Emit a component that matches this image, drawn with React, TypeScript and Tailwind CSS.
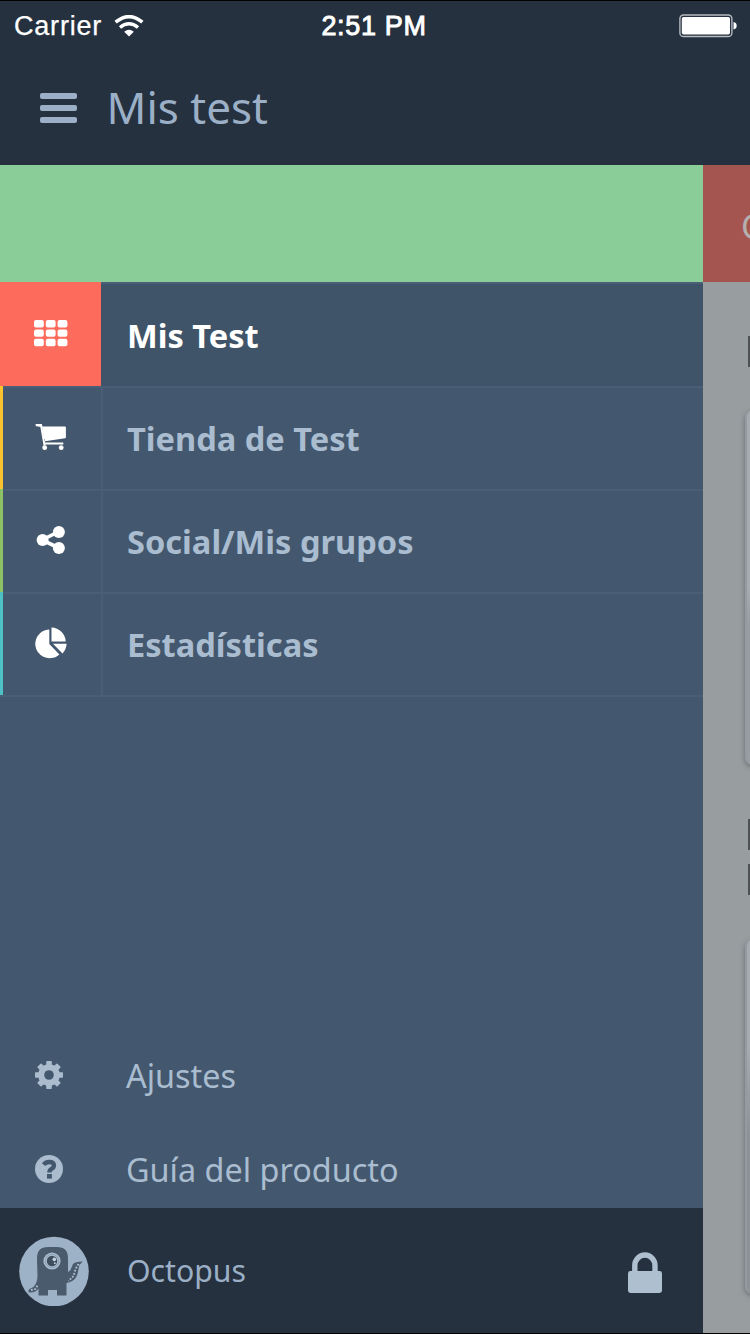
import React from "react";

const sans = "font-['Noto_Sans','Open_Sans',sans-serif]";

function GridIcon() {
  return (
    <svg viewBox="0 0 34 27" className="h-[27px] w-[34px] fill-white">
      {[0, 1, 2].map((r) =>
        [0, 1, 2].map((c) => (
          <rect key={`${r}${c}`} x={c * 11.8} y={r * 9.4} width="9.8" height="7.4" rx="2" />
        )),
      )}
    </svg>
  );
}

function CartIcon() {
  return (
    <svg viewBox="0 0 32 28" className="h-7 w-8">
      <path d="M.8 2.2H6L9.6 22.6M9 20.4H28.3" fill="none" stroke="#fff" strokeWidth="2" />
      <path d="M7 3.6H30Q30.9 3.6 30.9 4.6V14.2Q30.9 15 30 15.2L10 18.3V16H9Z" fill="#fff" />
      <path d="M.7 1H6.7L7.5 3.8H5Q2 3.6.7 2Z" fill="#fff" />
      <circle cx="9.7" cy="24.7" r="2.4" fill="#fff" />
      <circle cx="26.2" cy="24.7" r="2.4" fill="#fff" />
    </svg>
  );
}

function ShareIcon() {
  return (
    <svg viewBox="0 0 30 30" className="h-[30px] w-[30px] fill-white">
      <path d="M23 6.5L6 15L23 23" fill="none" stroke="#fff" strokeWidth="3.6" />
      <circle cx="22.9" cy="6.9" r="6" />
      <circle cx="6.6" cy="14.9" r="6" />
      <circle cx="22.9" cy="23.1" r="6" />
    </svg>
  );
}

function PieIcon() {
  return (
    <svg viewBox="0 0 32 32" className="h-8 w-8 fill-white">
      <path d="M14.3 2.4V17L24.4 27.4A14.4 14.4 0 1 1 14.3 2.4Z" />
      <path d="M16.5.5A14.6 14.6 0 0 1 30.7 14.6H16.5Z" />
      <path d="M18 16.8H31.6Q31.3 22.4 27.5 26.6Z" />
    </svg>
  );
}

function GearIcon() {
  return (
    <svg viewBox="0 0 28 28" className="h-7 w-7">
      <g fill="#aabccd">
        {[0, 45, 90, 135].map((a) => (
          <rect key={a} x="11.2" y="0" width="5.6" height="28" rx=".8" transform={`rotate(${a} 14 14)`} />
        ))}
        <circle cx="14" cy="14" r="10.8" />
      </g>
      <circle cx="14" cy="14" r="4.8" fill="#43586e" />
    </svg>
  );
}

function HelpIcon() {
  return (
    <svg viewBox="0 0 28 28" className="h-7 w-7">
      <circle cx="14" cy="14" r="14" fill="#aabccd" />
      <path d="M8.6 9.6Q10.7 7 14.3 7Q18.9 7 18.9 10.4Q18.9 12.3 16.5 13.8Q14.4 15 14.4 17.4" fill="none" stroke="#43586e" strokeWidth="4.4" />
      <rect x="12" y="19" width="4.9" height="4.6" fill="#43586e" />
    </svg>
  );
}

function LockIcon() {
  return (
    <svg viewBox="0 0 34 42" className="h-[42px] w-[34px]">
      <path d="M6.8 21V13.6A10.1 10.6 0 0 1 27 13.6V21" fill="none" stroke="#aebfd0" strokeWidth="5.4" />
      <rect x="0" y="19" width="34" height="22" rx="2.4" fill="#aebfd0" />
    </svg>
  );
}

function Monster() {
  return (
    <svg viewBox="0 0 70 70" className="h-[70px] w-[70px]">
      <circle cx="35" cy="35.5" r="34.8" fill="#9eb2c7" />
      <g fill="#4a5b6d">
        <path d="M18 22Q18 11 29 11H38Q49 11 49 22V36L51.5 34L54 28Q56 25.5 63.5 25.5Q62.5 27.5 60.5 28.5L58.5 38Q56 46 47.5 47V59.5H38V54H29V59.5H19.5V52.5Q17 56.8 10 56.4Q8.7 54.6 10.5 53L14.5 51Q18 47 18.5 41Z" />
      </g>
      <path d="M59.5 28L56.5 33L54.5 40L49.5 45M12 54L16.5 53L19 48.5" fill="none" stroke="#b0bfce" strokeWidth="1.8" strokeDasharray="1.8 1.5" />
      <circle cx="33" cy="25" r="8.6" fill="#a9bccf" />
      <circle cx="33" cy="25" r="7" fill="#7e92a6" />
      <circle cx="33" cy="25" r="6.4" fill="#a9bccf" />
      <circle cx="33" cy="25" r="5.2" fill="#3f4e5f" />
      <circle cx="35.3" cy="23.4" r="1.8" fill="#c5d3e0" />
      <circle cx="35.8" cy="27.2" r=".9" fill="#c5d3e0" />
    </svg>
  );
}

function StatusBar() {
  return (
    <div className="flex h-[50px] items-center pl-3.5 pr-[13px] font-['Liberation_Sans',sans-serif] text-white">
      <div className="flex flex-1 items-center gap-[13px]">
        <span className="text-[27px] tracking-[0.8px] [-webkit-text-stroke:0.25px_white]">Carrier</span>
        <svg viewBox="0 0 30 22" className="-ml-px h-[22px] w-[30px]">
          <path d="M1.6 7.2Q15-4 28.4 7.2" fill="none" stroke="#fff" strokeWidth="3.5" />
          <path d="M6 12.5Q15 5 24 12.5" fill="none" stroke="#fff" strokeWidth="3.4" />
          <path d="M10.2 16.8Q15 12.5 19.8 16.8L15 21.4Z" fill="#fff" />
        </svg>
      </div>
      <span className="mr-[3px] text-[27px] tracking-[0.65px] [-webkit-text-stroke:0.9px_white]">2:51 PM</span>
      <div className="flex flex-1 justify-end">
        <svg viewBox="0 0 58 24" className="h-6 w-[58px]">
          <rect x=".9" y="1" width="52" height="21.5" rx="3.6" fill="none" stroke="#b5babf" strokeWidth="1.4" />
          <rect x="2.8" y="3" width="48.2" height="17.6" rx="1.8" fill="#fff" />
          <path d="M54.5 8Q57.7 8.6 57.7 11.7T54.5 15.5Z" fill="#fff" />
        </svg>
      </div>
    </div>
  );
}

const items = [
  { label: "Mis Test", icon: <GridIcon />, bar: "bg-[#fc6b5b]", active: true },
  { label: "Tienda de Test", icon: <CartIcon />, bar: "bg-[#fcc22d]", active: false },
  { label: "Social/Mis grupos", icon: <ShareIcon />, bar: "bg-[#8dc265]", active: false },
  { label: "Estadísticas", icon: <PieIcon />, bar: "bg-[#4dc1c5]", active: false },
];

export default function App() {
  return (
    <div className={`flex h-[1334px] w-[750px] flex-col overflow-hidden border-y border-black bg-[#26313f] ${sans}`}>
      <header className="h-[164px] shrink-0">
        <StatusBar />
        <div className="flex h-[114px] items-center pl-[39.5px]">
          <div className="flex flex-col gap-1.5">
            <i className="h-1.5 w-[37px] rounded-xs bg-[#9bb0c6]" />
            <i className="h-1.5 w-[37px] rounded-xs bg-[#9bb0c6]" />
            <i className="h-1.5 w-[37px] rounded-xs bg-[#9bb0c6]" />
          </div>
          <h1 className="ml-[30px] pb-0.5 text-[44px] leading-none text-[#9bb0c6]">Mis test</h1>
        </div>
      </header>

      <div className="flex min-h-0 flex-1">
        <aside className="flex w-[703px] shrink-0 flex-col bg-[#43586e]">
          <div className="h-[117px] shrink-0 bg-[#8acd98]" />
          <nav>
            {items.map((it) => (
              <div key={it.label} className={it.active ? "flex h-[104px] bg-[#3f5468]" : "flex h-[103px]"}>
                <div className={it.active ? "flex w-[101px] bg-[#fc6b5b]" : "flex w-[101px]"}>
                  <div className={`w-[2.5px] ${it.bar}`} />
                  <div
                    className={
                      it.active
                        ? "flex flex-1 items-center justify-center pb-0.5 pr-[2.5px]"
                        : "flex flex-1 items-center justify-center border-t-2 border-[#4a5f76] pb-[3px] pr-0.5"
                    }
                  >
                    {it.icon}
                  </div>
                </div>
                <div
                  className={
                    it.active
                      ? "flex flex-1 items-center border-t-2 border-[#4b6077] pl-[26px] pt-0.5 text-[32.6px] font-bold text-white"
                      : "flex flex-1 items-center border-l-2 border-t-2 border-[#4a5f76] pl-6 pt-px text-[32.6px] font-bold text-[#aabccf]"
                  }
                >
                  {it.label}
                </div>
              </div>
            ))}
            <div className="h-0.5 bg-[#4a5f76]" />
          </nav>
          <div className="flex-1" />
          <div className="flex h-[110px] items-center pl-[35px] text-[32.4px] text-[#aabccf]">
            <GearIcon />
            <span className="ml-[63px]">Ajustes</span>
          </div>
          <div className="flex h-[78px] items-center pl-[35px] text-[32.4px] text-[#aabccf]">
            <HelpIcon />
            <span className="ml-[63px]">Guía del producto</span>
          </div>
          <footer className="flex h-[125px] shrink-0 items-center bg-[#26313f] pl-[19px] pr-[41px]">
            <Monster />
            <span className="ml-[38px] text-[30.2px] text-[#9bb0c6]">Octopus</span>
            <div className="ml-auto pt-1">
              <LockIcon />
            </div>
          </footer>
        </aside>

        <main className="w-[47px] overflow-hidden bg-[#989da0]">
          <div className="flex h-[117px] items-center overflow-hidden bg-[#a55550] pl-[38px] pt-1.5 text-[34px] text-[#b4b0b0]">
            C
          </div>
          <div className="pl-[45px] pt-[54px]">
            <div className="h-[31px] bg-[#4d5153]" />
          </div>
          <div className="ml-[42px] mt-[43px] h-[355px] w-20 rounded-lg border-l-2 border-[#9599a0] bg-linear-to-b from-[#a5abb0] from-50% to-[#979da2] to-60% shadow-[0_2px_5px_rgba(60,60,65,0.5)]" />
          <div className="mt-[54px] flex flex-col gap-[14px] pl-[45px]">
            <div className="h-[31px] bg-[#4d5153]" />
            <div className="h-[31px] bg-[#4d5153]" />
          </div>
          <div className="ml-[42px] mt-[44px] h-[355px] w-20 rounded-lg border-l-2 border-[#9599a0] bg-linear-to-b from-[#a5abb0] from-30% to-[#8c9296] to-55% shadow-[0_2px_5px_rgba(60,60,65,0.5)]" />
        </main>
      </div>
    </div>
  );
}
